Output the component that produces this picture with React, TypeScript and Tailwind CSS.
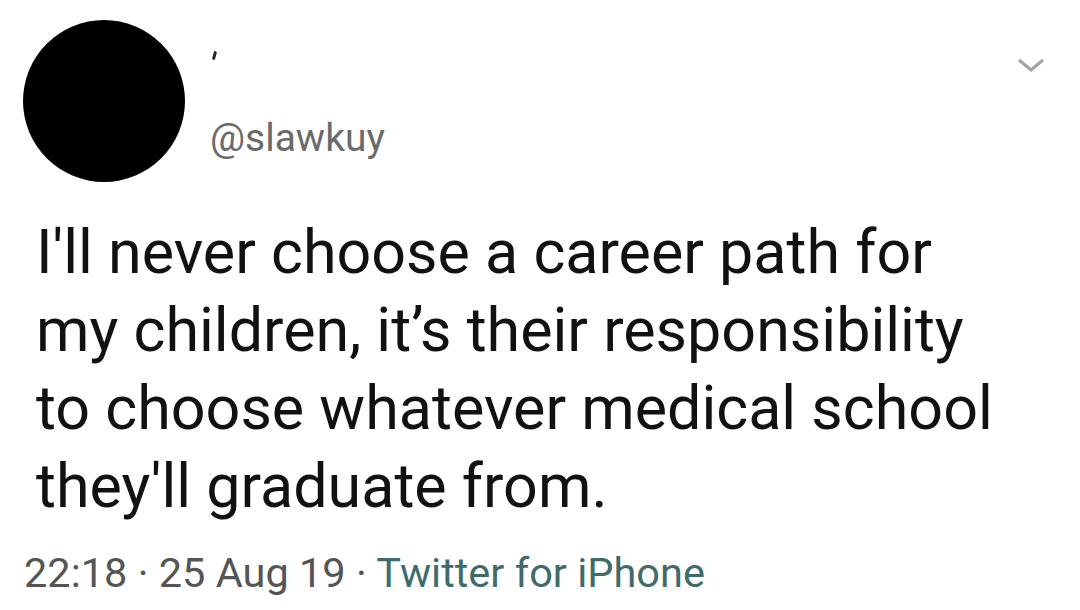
export default function App() {
  return (
    <div className="w-[1080px] h-[610px] bg-white overflow-hidden font-['Roboto',sans-serif]">
      <div className="flex items-start pt-[20px] pl-[23px] pr-[34px]">
        <div className="w-[162px] h-[162px] rounded-full bg-black shrink-0" />
        <div className="flex flex-col ml-[25px] flex-1">
          <div className="h-[50px] pt-[31px] pl-[3px]">
            <div className="w-[3px] h-[9px] bg-[#222] rotate-[15deg] rounded-full" />
          </div>
          <div className="mt-[49px] text-[39px] leading-none text-[#6a6a6a]">@slawkuy</div>
        </div>
        <svg className="mt-[36px]" width="30" height="20" viewBox="0 0 30 20">
          <path d="M3 4 L15 14 L27 4" fill="none" stroke="#a3a3a3" strokeWidth="3.2" />
        </svg>
      </div>
      <div className="pl-[36px] mt-[31px] text-[61px] leading-[78px] text-[#111]">
        <div>I'll never choose a career path for</div>
        <div>my children, it’s their responsibility</div>
        <div>to choose whatever medical school</div>
        <div>they'll graduate from.</div>
      </div>
      <div className="pl-[24px] mt-[27px] text-[41.5px] leading-none text-[#555]">
        22:18 · 25 Aug 19 · <span className="text-[#3f6b6b]">Twitter for iPhone</span>
      </div>
    </div>
  );
}
